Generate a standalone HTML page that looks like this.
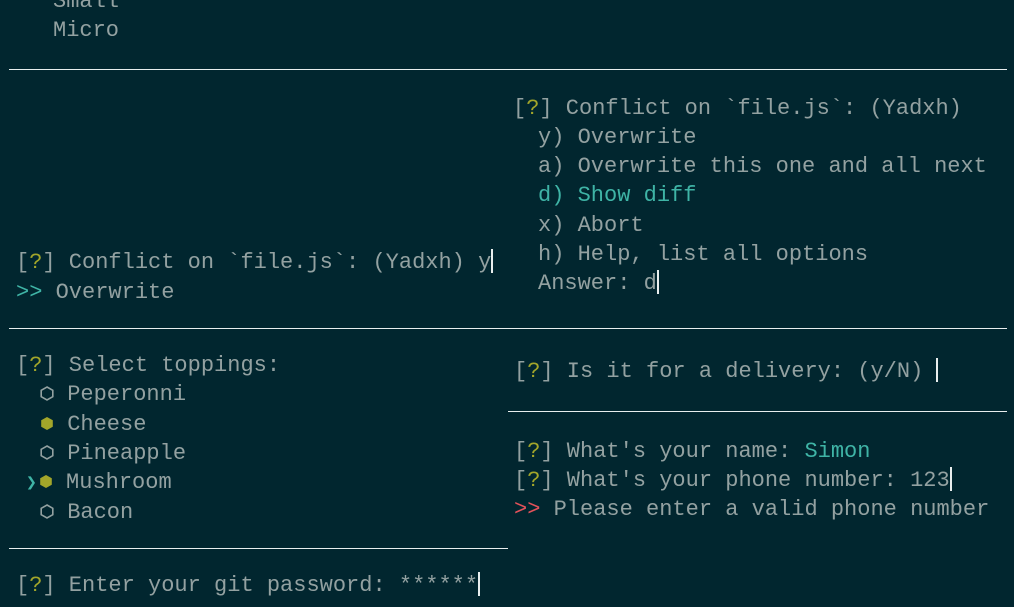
<!DOCTYPE html>
<html><head><meta charset="utf-8"><style>
html,body{margin:0;padding:0;}
body{width:1014px;height:607px;background:#01262f;overflow:hidden;position:relative;font-family:"Liberation Mono","DejaVu Sans Mono",monospace;font-size:22px;color:#93a1a1;}
.l{position:absolute;white-space:pre;line-height:29px;height:29px;margin-top:2px;}
.y{color:#a3a62a}.c{color:#3fb4a6}.r{color:#e2525a}
.hr{position:absolute;height:2px;background:#e8eeee;}
.cur{display:inline-block;width:2px;height:24px;background:#e8eeee;vertical-align:-5px;}
svg{vertical-align:-1px}
</style></head><body>
<div class="l" style="left:53px;top:-15px">Small</div>
<div class="l" style="left:53px;top:14px">Micro</div>
<div class="hr" style="left:9px;top:69px;width:998px;height:1px"></div>

<div class="l" style="left:513px;top:92px">[<span class="y">?</span>] Conflict on `file.js`: (Yadxh)</div>
<div class="l" style="left:538px;top:121px">y) Overwrite</div>
<div class="l" style="left:538px;top:150px">a) Overwrite this one and all next</div>
<div class="l c" style="left:538px;top:179px">d) Show diff</div>
<div class="l" style="left:538px;top:209px">x) Abort</div>
<div class="l" style="left:538px;top:238px">h) Help, list all options</div>
<div class="l" style="left:538px;top:267px">Answer: d<span class="cur"></span></div>

<div class="l" style="left:16px;top:246px">[<span class="y">?</span>] Conflict on `file.js`: (Yadxh) y<span class="cur"></span></div>
<div class="l" style="left:16px;top:276px"><span class="c">&gt;&gt;</span> Overwrite</div>
<div class="hr" style="left:9px;top:328px;width:998px;height:1px"></div>

<div class="l" style="left:16px;top:349px">[<span class="y">?</span>] Select toppings:</div>
<div class="l" style="left:40px;top:378px"><svg width="14" height="15" viewBox="0 0 14 15"><polygon points="7,1 12.8,4.3 12.8,10.7 7,14 1.2,10.7 1.2,4.3" fill="none" stroke="#93a1a1" stroke-width="1.6"/></svg> Peperonni</div>
<div class="l" style="left:40px;top:408px"><svg width="14" height="15" viewBox="0 0 14 15"><polygon points="7,1 12.8,4.3 12.8,10.7 7,14 1.2,10.7 1.2,4.3" fill="#a3a62a"/></svg> Cheese</div>
<div class="l" style="left:40px;top:437px"><svg width="14" height="15" viewBox="0 0 14 15"><polygon points="7,1 12.8,4.3 12.8,10.7 7,14 1.2,10.7 1.2,4.3" fill="none" stroke="#93a1a1" stroke-width="1.6"/></svg> Pineapple</div>
<div class="l" style="left:26px;top:466px"><span class="c" style="font-size:18px">&#x276F;</span><svg width="14" height="15" viewBox="0 0 14 15" style="margin-left:2px"><polygon points="7,1 12.8,4.3 12.8,10.7 7,14 1.2,10.7 1.2,4.3" fill="#a3a62a"/></svg> Mushroom</div>
<div class="l" style="left:40px;top:496px"><svg width="14" height="15" viewBox="0 0 14 15"><polygon points="7,1 12.8,4.3 12.8,10.7 7,14 1.2,10.7 1.2,4.3" fill="none" stroke="#93a1a1" stroke-width="1.6"/></svg> Bacon</div>
<div class="hr" style="left:9px;top:548px;width:499px;height:1px"></div>
<div class="l" style="left:16px;top:569px">[<span class="y">?</span>] Enter your git password: ******<span class="cur"></span></div>

<div class="l" style="left:514px;top:355px">[<span class="y">?</span>] Is it for a delivery: (y/N) <span class="cur"></span></div>
<div class="hr" style="left:508px;top:411px;width:499px;height:1px"></div>
<div class="l" style="left:514px;top:435px">[<span class="y">?</span>] What's your name: <span class="c">Simon</span></div>
<div class="l" style="left:514px;top:464px">[<span class="y">?</span>] What's your phone number: 123<span class="cur"></span></div>
<div class="l" style="left:514px;top:493px"><span class="r">&gt;&gt;</span> Please enter a valid phone number</div>
</body></html>
